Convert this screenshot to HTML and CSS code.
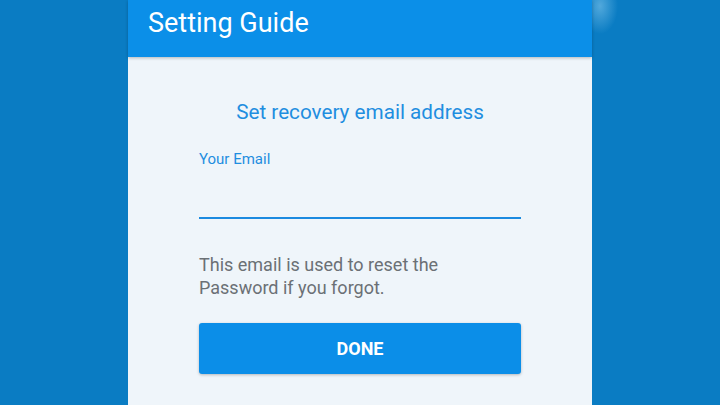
FILE: index.html
```html
<!DOCTYPE html>
<html>
<head>
<meta charset="utf-8">
<link rel="stylesheet" href="styles.css">
</head>
<body>
<div class="stage">
  <div class="phone">
    <header class="appbar"><h1 class="appbar-title">Setting Guide</h1></header>
    <main class="content">
      <h2 class="subtitle">Set recovery email address</h2>
      <label class="field">
        <span class="field-label">Your Email</span>
        <span class="field-input"></span>
      </label>
      <p class="hint">This email is used to reset the<br>Password if you forgot.</p>
      <button class="done-btn">DONE</button>
    </main>
  </div>
</div>
</body>
</html>
```
FILE: styles.css
```css
html, body {
  margin: 0;
  padding: 0;
}
body {
  width: 720px;
  height: 405px;
  overflow: hidden;
  background: radial-gradient(ellipse 18px 28px at 600px 6px, rgba(140, 205, 240, 0.55), rgba(140, 205, 240, 0) 100%), #0a7cc3;
  font-family: Roboto, "Noto Sans", sans-serif;
}
.stage {
  display: flex;
  height: 405px;
  padding-left: 128px;
}
.phone {
  width: 464px;
  height: 405px;
  display: flex;
  flex-direction: column;
  background: #eff5fa;
}
.appbar {
  height: 57px;
  background: #0b8fe8;
  box-shadow: 0 1px 3px rgba(0,0,0,0.25);
  padding-left: 20px;
  display: flex;
  align-items: flex-start;
  position: relative;
  z-index: 1;
}
.appbar-title {
  margin: 7px 0 0;
  font-weight: 400;
  font-size: 27px;
  line-height: 32px;
  color: #ffffff;
}
.content {
  flex: 1;
  padding: 0 71px;
  display: flex;
  flex-direction: column;
}
.subtitle {
  margin: 41px 0 0;
  font-weight: 400;
  font-size: 20.7px;
  line-height: 28px;
  text-align: center;
  color: #1f8ee0;
}
.field {
  display: flex;
  flex-direction: column;
  margin-top: 24px;
}
.field-label {
  font-size: 15px;
  line-height: 18px;
  color: #1f8ee0;
}
.field-input {
  height: 49px;
  border-bottom: 2px solid #1b8ae0;
}
.hint {
  margin: 34px 0 0;
  font-size: 18px;
  line-height: 23px;
  color: #6b7075;
}
.done-btn {
  margin-top: 24px;
  height: 51px;
  border: none;
  border-radius: 3px;
  background: #0b8ee8;
  color: #ffffff;
  font-family: Roboto, "Noto Sans", sans-serif;
  font-weight: 700;
  font-size: 18px;
  box-shadow: 0 1px 3px rgba(0,0,0,0.25);
}
```
